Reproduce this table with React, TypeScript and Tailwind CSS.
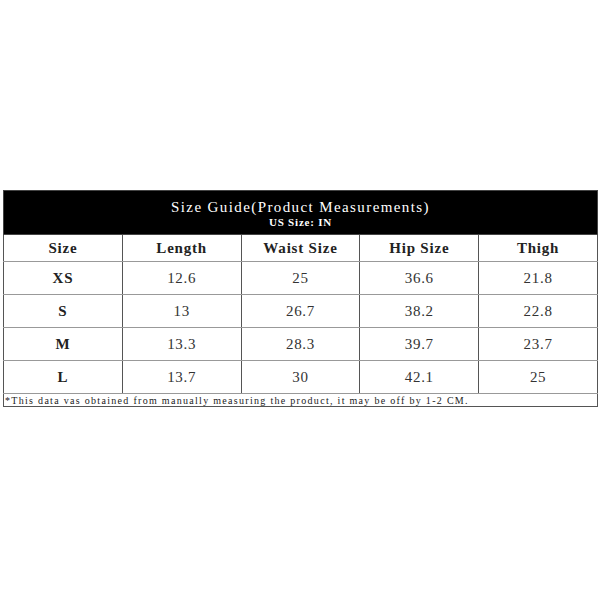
// Tabla de talles (medidas del producto).
const HEAD = ['Size', 'Length', 'Waist Size', 'Hip Size', 'Thigh'];

const ROWS = [
  ['XS', '12.6', '25', '36.6', '21.8'],
  ['S', '13', '26.7', '38.2', '22.8'],
  ['M', '13.3', '28.3', '39.7', '23.7'],
  ['L', '13.7', '30', '42.1', '25'],
];

export default function App() {
  return (
    <div className="h-[600px] w-[600px] bg-white pt-[190px] pl-[3px] font-['Liberation_Serif',serif] text-[#222]">
      <table className="w-[595px] table-fixed border-collapse">
        <thead>
          <tr>
            <th
              colSpan={5}
              className="h-[44px] border border-[#444] bg-black pt-[2px] align-middle font-normal text-white"
            >
              <div className="text-[15px] leading-[16px] tracking-[1.4px]">Size Guide(Product Measurements)</div>
              <div className="text-[11px] font-bold leading-[14px] tracking-[0.8px]">US Size: IN</div>
            </th>
          </tr>
          <tr>
            {HEAD.map((h) => (
              <th
                key={h}
                className="h-[27px] border border-x-[#555] border-y-[#999] text-[15px] font-bold tracking-[0.8px] text-[#222]"
              >
                {h}
              </th>
            ))}
          </tr>
        </thead>
        <tbody>
          {ROWS.map((r) => (
            <tr key={r[0]}>
              {r.map((c, i) => (
                <td
                  key={i}
                  className={`h-[33px] border border-x-[#555] border-y-[#999] text-center ${
                    i === 0 ? 'text-[15px] font-bold tracking-[0.8px]' : 'text-[15px] tracking-[0.7px] text-[#333]'
                  }`}
                >
                  {c}
                </td>
              ))}
            </tr>
          ))}
          <tr>
            <td
              colSpan={5}
              className="h-[13px] border border-[#555] pl-[1px] text-[10px] leading-[11px] tracking-[1.3px] text-[#222]"
            >
              *This data vas obtained from manually measuring the product, it may be off by 1-2 CM.
            </td>
          </tr>
        </tbody>
      </table>
    </div>
  );
}
